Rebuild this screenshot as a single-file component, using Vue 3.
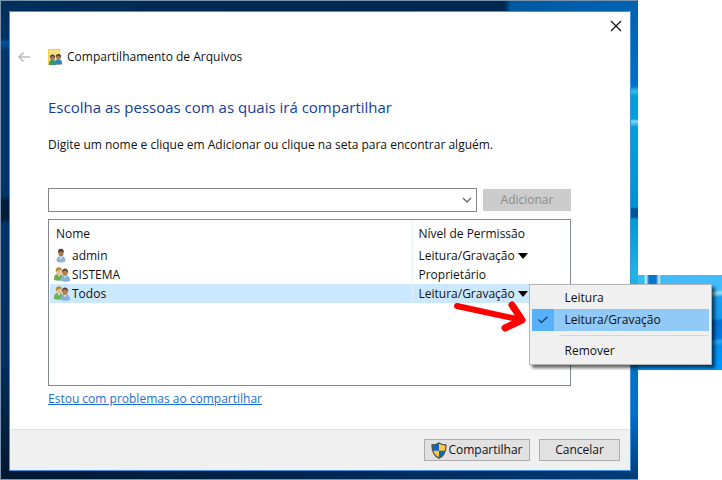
<script setup>
import { ref } from 'vue'

const name = ref('')
const selected = ref(3)
const menuOpen = ref(true)

const people = ref([
  { id: 1, name: 'admin', group: false, level: 'Leitura/Gravação', editable: true },
  { id: 2, name: 'SISTEMA', group: true, level: 'Proprietário', editable: false },
  { id: 3, name: 'Todos', group: true, level: 'Leitura/Gravação', editable: true }
])

const levels = ['Leitura', 'Leitura/Gravação']

function openMenu(person) {
  menuOpen.value = selected.value !== person.id || !menuOpen.value
  selected.value = person.id
}

function setLevel(person, level) {
  person.level = level
  menuOpen.value = false
}

function removePerson(person) {
  people.value = people.value.filter((p) => p.id !== person.id)
  menuOpen.value = false
}
</script>

<template>
  <div class="page">
    <div class="wallpaper-piece"></div>
    <div class="desktop">
      <main class="window">
        <div class="caption">
          <button class="close" aria-label="Fechar">
            <svg width="12" height="12" viewBox="0 0 12 12"><path d="M1 1l10 10M11 1L1 11" stroke="#111" stroke-width="1.2" /></svg>
          </button>
        </div>
        <header class="title-row">
          <button class="back" aria-label="Voltar">
            <svg width="14" height="12" viewBox="0 0 14 12"><path d="M13 6H2M6.500 1.500L2 6l4.500 4.500" fill="none" stroke="#bdbdbd" stroke-width="1.700" /></svg>
          </button>
          <svg class="folder" width="14" height="17" viewBox="0 0 14 17">
            <path d="M0 0h12v16H0z" fill="#f3cf55" />
            <path d="M1 1h10v14H1z" fill="#fbe07a" />
            <path d="M1 16c0-4 1-5 3.500-5S8 12 8 16z" fill="#2f9a6b" />
            <path d="M6.500 15.500c0-4 1-5 4-5s3.500 1 3.500 5z" fill="#3187bd" />
            <ellipse cx="4.500" cy="8.500" rx="2.400" ry="2.800" fill="#a87752" />
            <ellipse cx="10.500" cy="7.800" rx="2.400" ry="2.800" fill="#a87752" />
            <path d="M1.800 8.500c0-4 5.400-4 5.400 0L4.500 7zM7.800 8c0-4 5.400-4 5.400 0l-2.700-1.500z" fill="#413f3c" />
          </svg>
          <span>Compartilhamento de Arquivos</span>
        </header>

        <section class="content">
          <h1>Escolha as pessoas com as quais irá compartilhar</h1>
          <label class="hint" for="person">Digite um nome e clique em Adicionar ou clique na seta para encontrar alguém.</label>

          <div class="add-row">
            <div class="combo">
              <input id="person" v-model="name" type="text" />
              <button aria-label="Mostrar pessoas">
                <svg width="10" height="6" viewBox="0 0 10 6"><path d="M1 1l4 4 4-4" fill="none" stroke="#666" stroke-width="1.300" /></svg>
              </button>
            </div>
            <button class="add" :disabled="!name">Adicionar</button>
          </div>

          <div class="list">
            <table>
              <thead>
                <tr>
                  <th>Nome</th>
                  <th class="level-col">Nível de Permissão</th>
                </tr>
              </thead>
              <tbody>
                <tr v-for="person in people" :key="person.id" :class="{ selected: person.id === selected }">
                  <td>
                    <div class="person">
                      <svg v-if="person.group" width="16" height="15" viewBox="0 0 16 15">
                        <path d="M0 13c0-5 1-6 4.500-6S9 8 9 13c-3 1-6 1-9 0z" fill="#6fae50" />
                        <path d="M3.500 7l1.500 3 1.500-3z" fill="#e4f2d9" />
                        <ellipse cx="5" cy="4.300" rx="2.800" ry="3.600" fill="#e5bf8c" />
                        <path d="M1.800 5C.8-.8 7.700-.8 8 3 5 2 4 4 1.800 5z" fill="#b58c36" />
                        <path d="M6.500 14c0-4 1-5.500 4.500-5.500s5 1.500 5 5.500c-3 1-6 1-9.500 0z" fill="#82b1e0" />
                        <path d="M10 8.500l1 3 1.500-3z" fill="#e5f1fc" />
                        <ellipse cx="11" cy="5.500" rx="2.800" ry="3.600" fill="#b98054" />
                        <path d="M7.900 6c-.5-6 6.700-6 6.300 0-1-2-3-3-4.800-2z" fill="#564334" />
                      </svg>
                      <svg v-else width="16" height="15" viewBox="0 0 16 15">
                        <path d="M2.500 13C2.500 9.500 4 8 7 8s4.500 1.500 4.500 5c-2 2-7 2-9 0z" fill="#8eb7df" />
                        <path d="M5.500 8L7 11.500 8.500 8z" fill="#e5f1fc" />
                        <ellipse cx="7" cy="4.700" rx="2.600" ry="3.800" fill="#a8744c" />
                        <path d="M4.100 5C3.200-.6 10.300-.6 9.900 4.500 8 2.500 6 3 4.100 5z" fill="#4d3c30" />
                      </svg>
                      <span>{{ person.name }}</span>
                    </div>
                  </td>
                  <td class="level-col">
                    <button v-if="person.editable" class="level" aria-haspopup="menu" @click="openMenu(person)">
                      {{ person.level }}
                      <svg width="10" height="6" viewBox="0 0 10 6"><path d="M0 0h10L5 6z" /></svg>
                    </button>
                    <span v-else>{{ person.level }}</span>

                    <div v-if="menuOpen && person.id === selected && person.editable" class="menu" role="menu">
                      <button
                        v-for="level in levels"
                        :key="level"
                        role="menuitemradio"
                        :aria-checked="level === person.level"
                        :class="{ checked: level === person.level }"
                        @click="setLevel(person, level)"
                      >
                        <span class="tick">
                          <svg v-if="level === person.level" width="10" height="8" viewBox="0 0 10 8"><path d="M.5 3.500l3 3L9.500.8" fill="none" stroke="#1d4263" stroke-width="1.400" /></svg>
                        </span>
                        {{ level }}
                      </button>
                      <hr />
                      <button role="menuitem" @click="removePerson(person)">
                        <span class="tick"></span>
                        Remover
                      </button>
                    </div>
                  </td>
                </tr>
              </tbody>
            </table>
            <svg class="pointer" width="76" height="36" viewBox="0 0 76 36">
              <path d="M5 7l60 13" fill="none" stroke="#f00" stroke-width="6" stroke-linecap="round" />
              <path d="M60 6l10 15-17 8" fill="none" stroke="#f00" stroke-width="7" stroke-linecap="round" stroke-linejoin="round" />
            </svg>
          </div>

          <a class="help" href="#">Estou com problemas ao compartilhar</a>
        </section>

        <footer>
          <button class="share">
            <svg width="16" height="17" viewBox="0 0 16 17">
              <path d="M8 .5C6 2 3 2.500 1 2.500 1 9 2 13.500 8 16.500 14 13.500 15 9 15 2.500 13 2.500 10 2 8 .5z" fill="#ffc83d" />
              <path d="M8 .5C6 2 3 2.500 1 2.500c0 2.500 0 4.300.6 6.200H8zM8 8.700h6.400C13.500 12.500 12 14.700 8 16.500z" fill="#0b67c6" />
              <path d="M8 1C6 2.500 3 3 1 3c0 6 1 10.500 7 13.200C14 13.500 15 9 15 3 13 3 10 2.500 8 1z" fill="none" stroke="#555" stroke-width="1.300" />
            </svg>
            Compartilhar
          </button>
          <button class="cancel">Cancelar</button>
        </footer>
      </main>
    </div>
  </div>
</template>

<style>
body {
  margin: 0;
  background: #fff;
}
</style>

<style scoped>
.page {
  position: relative;
  padding-right: 84px;
  font-family: "Open Sans", "Noto Sans", sans-serif;
  font-size: 12px;
  line-height: 16px;
  color: #111;
}

.page * { box-sizing: border-box; }

button {
  padding: 0;
  border: none;
  background: none;
  font: inherit;
  color: inherit;
}

svg { display: block; flex: none; }

.desktop {
  border: solid #7894ae;
  border-width: 1px 0 1px 1px;
  padding: 10px 7px 8px 8px;
  background:
    linear-gradient(#0060b0, #0071cc 85px, #35bdec 90px, #00a0df 95px, #00a0df 118px, #8ed9f3 120px, #009fdf 126px, #0091d8 206px, #00529b 208px, #00529b 216px, #0098d9 218px, #20b3e5 275px, #0072c4 370px, #0070d0 410px, #003c78) right / 8px 100% no-repeat,
    linear-gradient(90deg, #00172f, #00264f 50%, #003c78) bottom / 100% 9px no-repeat,
    linear-gradient(90deg, #00305e, #002b54 21%, #002a52 22%, #00284e 79%, #0058a0 80%, #0063b5) top / 100% 11px no-repeat,
    linear-gradient(#002d59, #003466 38px, #0054a0 41px, #00376b 50px, #003466 194px, #001c3b 200px, #001c3b 218px, #003466 222px, #00305f 360px, #00172f);
}

.wallpaper-piece {
  position: absolute;
  top: 275px;
  right: 0;
  width: 84px;
  height: 95px;
  background:
    linear-gradient(90deg, #35bdec 6px, #d7f4ff 8px, #0875cb 11px, #0875cb 18px, #c9efff 21px, transparent 23px) top / 100% 12px no-repeat,
    linear-gradient(175deg, #45baf7, #43bdff 22px, #9be0ff 25px, #189ff3 29px, #129af0 50px, #0073d8 53px, #007ce2 70px, #29a8f7 73px, #0091f5 78px, #0099ff);
}

.window {
  display: flex;
  flex-direction: column;
  border: 1px solid #3d93dd;
  background: #fff;
}

.caption {
  display: flex;
  justify-content: flex-end;
  padding: 8px 8px 0;
  height: 28px;
}

.close {
  display: grid;
  place-items: center;
  width: 12px;
  height: 12px;
}

.title-row {
  display: flex;
  align-items: center;
  height: 34px;
  padding-left: 7px;
}

.back { width: 31px; }

.folder { margin-right: 5px; }

.content { padding: 0 59px 0 38px; }

h1 {
  margin: 21px 0 18px;
  font-size: 15px;
  line-height: 24px;
  font-weight: 400;
  color: #123d9c;
}

.hint { display: block; }

.add-row {
  display: flex;
  align-items: center;
  gap: 6px;
  margin-top: 35px;
}

.combo {
  display: flex;
  flex: 1;
  height: 24px;
  border: 1px solid #858585;
}

.combo input {
  flex: 1;
  min-width: 0;
  padding: 0 4px;
  border: none;
  outline: none;
  font: inherit;
}

.combo button {
  display: grid;
  place-items: center;
  width: 18px;
}

.add {
  width: 88px;
  height: 22px;
  background: #ccc;
  color: #8b8b8b;
}

.list {
  position: relative;
  min-height: 167px;
  margin-top: 7px;
  padding: 1px;
  border: 1px solid #828790;
}

table {
  width: 100%;
  border-collapse: collapse;
  table-layout: fixed;
}

th {
  height: 25px;
  padding: 0 6px;
  font-weight: 400;
  text-align: left;
}

td {
  height: 19px;
  padding: 0 4px;
}

.level-col {
  position: relative;
  width: 157px;
  padding: 0 6px;
  border-left: 1px solid #e8f0f7;
}

.person {
  display: flex;
  align-items: center;
  gap: 2px;
}

.selected td { background: #cce8ff; }

.level {
  display: flex;
  align-items: center;
  gap: 3px;
}

.menu {
  position: absolute;
  top: 0;
  left: 116px;
  z-index: 2;
  width: 183px;
  padding: 2px;
  border: 1px solid #b4b4b4;
  background: #f0f0f0;
  box-shadow: 3px 3px 3px rgba(0, 0, 0, 0.6);
}

.menu button {
  display: flex;
  align-items: center;
  gap: 11px;
  width: 100%;
  height: 22px;
}

.menu .checked { background: #91c9f7; }

.tick {
  display: grid;
  place-items: center;
  width: 22px;
  height: 22px;
}

.checked .tick { background: #56b0fa; }

.menu hr {
  height: 1px;
  margin: 4px 0 4px 28px;
  border: none;
  background: #d7d7d7;
}

.pointer {
  position: absolute;
  top: 79px;
  right: 42px;
  z-index: 3;
}

.help {
  display: inline-block;
  margin: 5px 0 22px;
  color: #1a6fd4;
}

footer {
  display: flex;
  justify-content: flex-end;
  gap: 9px;
  padding: 9px 10px;
  border-top: 1px solid #dfdfdf;
  background: #f0f0f0;
}

footer button {
  display: flex;
  align-items: center;
  justify-content: center;
  gap: 1px;
  height: 22px;
  border: 1px solid #adadad;
  background: #e1e1e1;
}

.share { width: 106px; }

.cancel { width: 81px; }
</style>
